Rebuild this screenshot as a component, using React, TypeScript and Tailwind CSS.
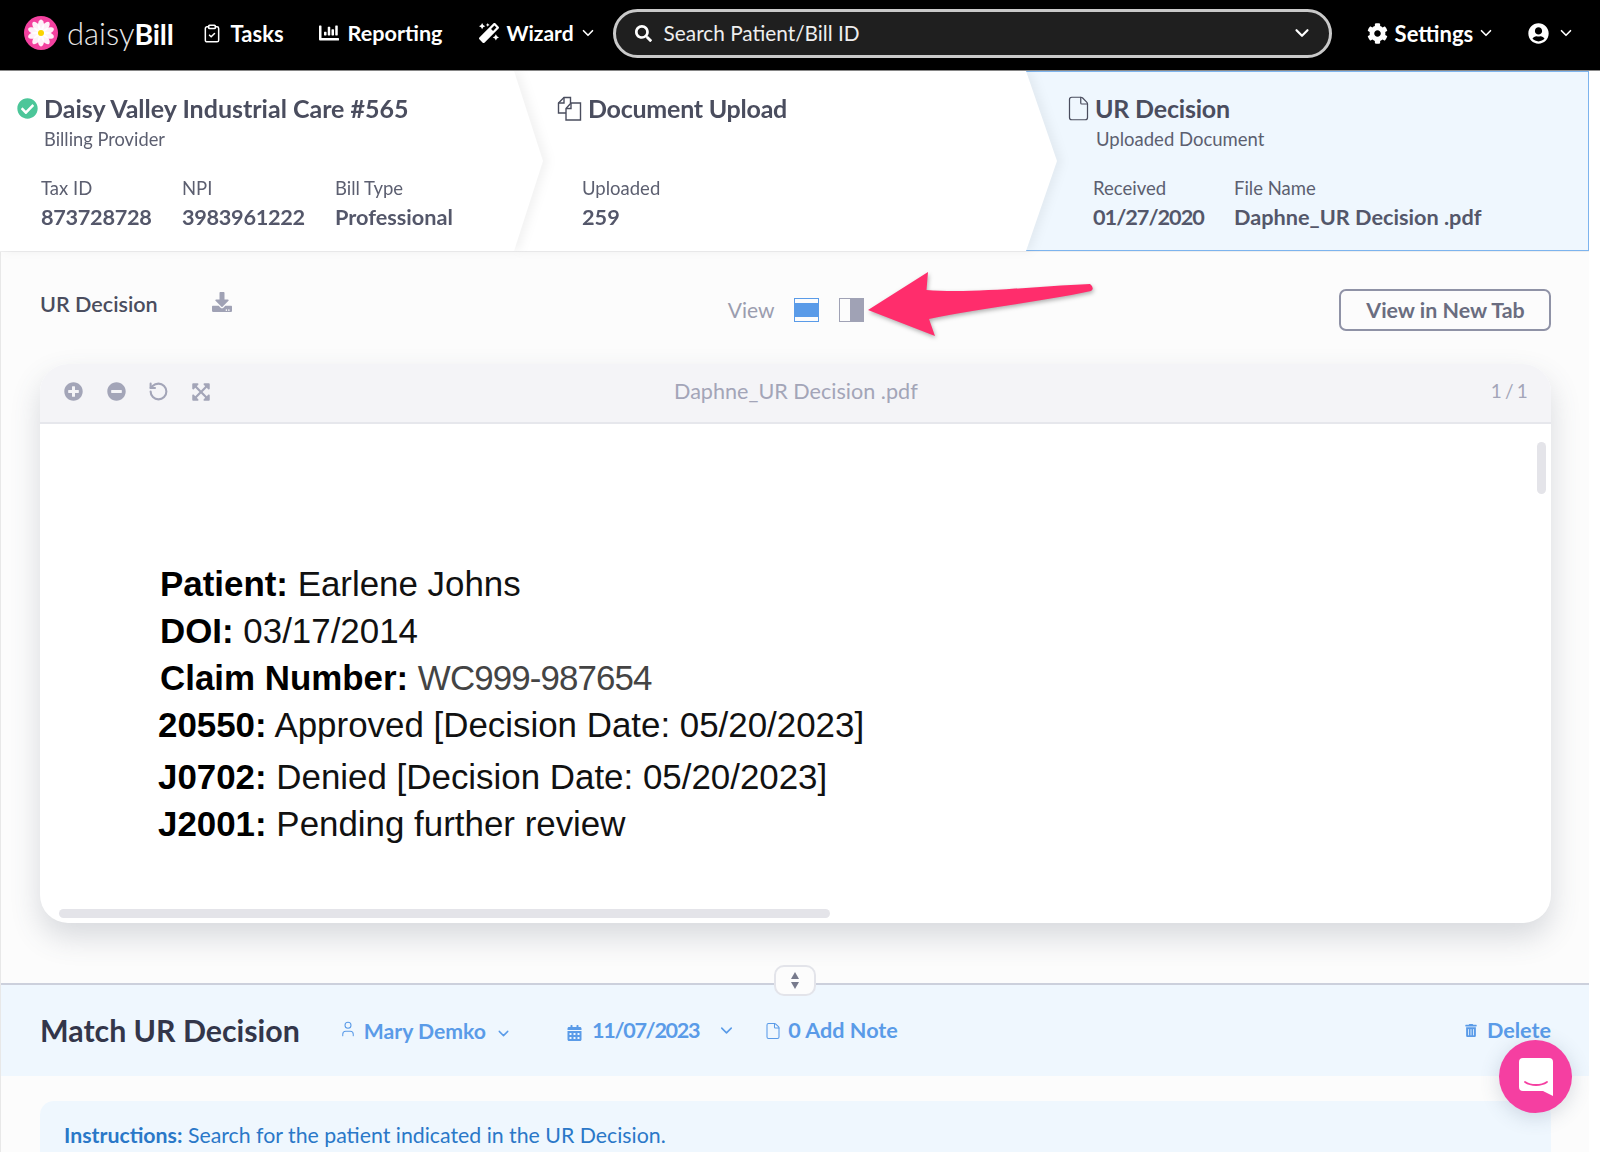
import { ChevronDown, ClipboardCheck, File, RotateCcw, User } from 'lucide-react';
import {
  FaCalendarAlt,
  FaChartBar,
  FaCheckCircle,
  FaCog,
  FaDownload,
  FaExpandArrowsAlt,
  FaMagic,
  FaMinusCircle,
  FaPlusCircle,
  FaSearch,
  FaTrashAlt,
  FaUserCircle,
} from 'react-icons/fa';

function Logo() {
  const petals = [0, 36, 72, 108, 144, 180, 216, 252, 288, 324];
  return (
    <svg viewBox="0 0 34 34" className="h-[34px] w-[34px] shrink-0">
      <circle cx="17" cy="17" r="17" fill="#f3419f" />
      {petals.map((a) => (
        <ellipse key={a} cx="17" cy="9.5" rx="3.1" ry="6" fill="#fff" opacity="0.92" transform={`rotate(${a} 17 17)`} />
      ))}
      <circle cx="17" cy="17" r="3" fill="#fbd400" />
    </svg>
  );
}

function CopyDocs() {
  return (
    <svg viewBox="0 0 25 25" className="h-[25px] w-[25px] shrink-0" fill="none" stroke="#4a4d5e" strokeWidth="1.4">
      <path d="M9 17H1.5V7L7 1.5h6.5V7" />
      <path d="M7 1.5V7H1.5" />
      <path d="M9 24V12.5L14 7h9.5v17z" />
      <path d="M14 7v5.5H9" />
    </svg>
  );
}

function Stat({ label, value, className }: { label: string; value: string; className: string }) {
  return (
    <div className={className}>
      <div className="text-[18.5px] leading-[22px] text-[#5c5f70]">{label}</div>
      <div className="mt-[5px] text-[21.7px] leading-[26px] font-bold text-[#54576a]">{value}</div>
    </div>
  );
}

function NavBar() {
  return (
    <nav className="flex h-[71px] shrink-0 items-center border-b border-[#8a8a8a] bg-black pb-[4px] pl-[24px] text-white">
      <Logo />
      <span className="ml-[9px] text-[31px] leading-none font-light text-[#e8e8e8]">
        daisy<span className="text-[28.5px] font-bold tracking-[-0.2px] text-white">Bill</span>
      </span>
      <ClipboardCheck className="ml-[28px] h-[23px] w-[20px]" strokeWidth={1.8} />
      <span className="ml-[9px] text-[22px] font-bold">Tasks</span>
      <FaChartBar className="ml-[35px] h-[20px] w-[20px]" />
      <span className="ml-[9px] text-[21.6px] font-bold">Reporting</span>
      <FaMagic className="ml-[36px] h-[20px] w-[20px]" />
      <span className="ml-[8px] text-[21px] font-bold">Wizard</span>
      <ChevronDown className="ml-[5px] h-[18px] w-[18px]" strokeWidth={2.2} />
      <div className="ml-[16px] flex h-[49px] w-[719px] items-center rounded-full border-[3px] border-[#c9c9c9] bg-[#1f1f1f] pr-[16px] pl-[19px]">
        <FaSearch className="h-[17px] w-[17px]" />
        <span className="ml-[12px] text-[20.8px] text-[#eeeeee]">Search Patient/Bill ID</span>
        <ChevronDown className="ml-auto h-[22px] w-[22px]" strokeWidth={2.4} />
      </div>
      <FaCog className="ml-[35px] h-[21px] w-[21px]" />
      <span className="ml-[7px] text-[22px] font-bold">Settings</span>
      <ChevronDown className="ml-[4px] h-[18px] w-[18px]" strokeWidth={2.2} />
      <FaUserCircle className="ml-[33px] h-[21px] w-[21px]" />
      <ChevronDown className="ml-[8px] h-[18px] w-[18px]" strokeWidth={2.2} />
    </nav>
  );
}

function Steps() {
  return (
    <div className="flex h-[181px] w-[1589px] shrink-0 border-b border-[#eeeeef] text-[#4a4d5e]">
      <div className="relative z-20 w-[543px] shrink-0 drop-shadow-[5px_0_5px_rgba(0,0,0,0.05)]">
        <div className="h-full bg-white pt-[21px] [clip-path:polygon(0_0,514px_0,543px_50%,514px_100%,0_100%)]">
          <div className="flex items-center pl-[17px]">
            <FaCheckCircle className="h-[21px] w-[21px] text-[#4cc699]" />
            <span className="ml-[6px] text-[25px] leading-[32px] font-bold">Daisy Valley Industrial Care #565</span>
          </div>
          <div className="mt-[3px] pl-[44px] text-[18.3px] leading-[24px] text-[#5c5f70]">Billing Provider</div>
          <div className="mt-[26px] flex pl-[41px]">
            <Stat label="Tax ID" value="873728728" className="w-[141px] [&>div:last-child]:tracking-[-0.3px]" />
            <Stat label="NPI" value="3983961222" className="w-[153px] [&>div:last-child]:tracking-[-0.3px]" />
            <Stat label="Bill Type" value="Professional" className="" />
          </div>
        </div>
      </div>
      <div className="relative z-10 -ml-[29px] w-[543px] shrink-0 drop-shadow-[5px_0_5px_rgba(0,0,0,0.05)]">
        <div className="h-full bg-white pt-[21px] [clip-path:polygon(0_0,512px_0,543px_50%,512px_100%,0_100%)]">
          <div className="flex items-center pl-[43px]">
            <CopyDocs />
            <span className="ml-[6px] text-[25px] leading-[32px] font-bold tracking-[-0.25px]">Document Upload</span>
          </div>
          <div className="mt-[29px] pl-[68px] pt-[24px]">
            <Stat label="Uploaded" value="259" className="" />
          </div>
        </div>
      </div>
      <div className="-ml-[31px] w-[563px] shrink-0 border-y border-r border-[#7db4ee] bg-[#eff7fe] pt-[20px]">
        <div className="flex items-center pl-[39px]">
          <File className="h-[29px] w-[27px] text-[#4a4d5e]" strokeWidth={1.1} />
          <span className="ml-[3px] text-[25px] leading-[32px] font-bold tracking-[-0.2px]">UR Decision</span>
        </div>
        <div className="mt-[3px] pl-[70px] text-[18.5px] leading-[24px] text-[#5c5f70]">Uploaded Document</div>
        <div className="mt-[26px] flex pl-[67px]">
          <Stat label="Received" value="01/27/2020" className="w-[141px] [&>div:last-child]:tracking-[-1px]" />
          <Stat label="File Name" value="Daphne_UR Decision .pdf" className="" />
        </div>
      </div>
    </div>
  );
}

function Arrow() {
  return (
    <svg viewBox="0 0 240 80" className="absolute top-[264px] left-[860px] h-[80px] w-[240px] drop-shadow-[1px_2px_2px_rgba(0,0,0,0.3)]">
      <path d="M8 46 L68 8 L66.5 26 C110 30 180 22 230 20 Q235 24 231 27 C180 38 110 46 69 55 L75 72 Z" fill="#ff2d6c" />
    </svg>
  );
}

function DocLine({ bold, text, className, textClass }: { bold: string; text: string; className: string; textClass?: string }) {
  return (
    <div className={className}>
      <span className="font-bold text-black">{bold}</span> <span className={textClass}>{text}</span>
    </div>
  );
}

function Viewer() {
  return (
    <div className="mt-[32px] ml-[39px] flex h-[559px] w-[1511px] flex-col overflow-hidden rounded-[28px] bg-white shadow-[0_14px_30px_rgba(70,80,100,0.2)]">
      <div className="relative flex h-[60px] shrink-0 items-center border-b-2 border-[#e6e7ec] bg-[#f4f4f7] pb-[3px] text-[#a3a5b8]">
        <FaPlusCircle className="ml-[24px] h-[19px] w-[19px]" />
        <FaMinusCircle className="ml-[24px] h-[19px] w-[19px]" />
        <RotateCcw className="ml-[22px] h-[21px] w-[21px]" strokeWidth={2.4} />
        <FaExpandArrowsAlt className="ml-[22px] h-[20px] w-[20px]" />
        <span className="ml-[463px] text-[21.6px]">Daphne_UR Decision .pdf</span>
        <span className="ml-auto pr-[24px] text-[19px] tracking-[-0.8px]">1 / 1</span>
      </div>
      <div className="relative flex-1 pt-[136px] [font-family:'Liberation_Sans',Arial,sans-serif] text-[34.9px] leading-[47px] text-[#111]">
        <div className="absolute top-[18px] right-[5px] h-[52px] w-[9px] rounded-full bg-[#e4e4e9]" />
        <DocLine bold="Patient:" text="Earlene Johns" className="pl-[120px]" />
        <DocLine bold="DOI:" text="03/17/2014" className="pl-[120px]" />
        <DocLine bold="Claim Number:" text="WC999-987654" className="pl-[120px]" textClass="tracking-[-0.9px] text-[#444]" />
        <DocLine bold="20550:" text="Approved [Decision Date: 05/20/2023]" className="pl-[118px]" />
        <DocLine bold="J0702:" text="Denied [Decision Date: 05/20/2023]" className="mt-[5px] pl-[118px]" />
        <DocLine bold="J2001:" text="Pending further review" className="pl-[118px]" />
        <div className="absolute bottom-[5px] left-[19px] h-[9px] w-[771px] rounded-full bg-[#e4e4e9]" />
      </div>
    </div>
  );
}

export default function App() {
  return (
    <div className="relative flex h-[1152px] w-[1600px] flex-col overflow-hidden bg-white [font-family:Lato,'Open_Sans',sans-serif]">
      <NavBar />
      <Steps />
      <main className="flex w-[1589px] flex-1 flex-col border-l border-[#e8e8e8] bg-[#fcfcfc]">
        <div className="flex h-[80px] shrink-0 pt-[38px]">
          <span className="mt-[2px] ml-[39px] text-[21.6px] leading-[24px] font-semibold text-[#4a4d5e]">UR Decision</span>
          <FaDownload className="mt-[2px] ml-[54px] h-[20px] w-[20px] text-[#a0a2b5]" />
          <span className="mt-[7px] ml-[496px] text-[21px] leading-[26px] text-[#9b9daf]">View</span>
          <div className="mt-[8px] ml-[20px] h-[24px] w-[25px] border border-[#5a9be8] py-[4px]">
            <div className="h-full bg-[#5a9be8]" />
          </div>
          <div className="mt-[8px] ml-[20px] flex h-[24px] w-[25px] justify-end border border-[#a0a2b5]">
            <div className="h-full w-[13px] bg-[#a0a2b5]" />
          </div>
          <button className="mt-[-1px] ml-[475px] h-[42px] w-[212px] rounded-[7px] border-2 border-[#8f92a6] text-[21.4px] font-bold text-[#6a6d80]">
            View in New Tab
          </button>
        </div>
        <Viewer />
        <div className="relative mt-[60px] h-[2px] shrink-0 bg-[#ccd0dc]">
          <div className="absolute top-[-18px] left-[773px] flex h-[31px] w-[42px] flex-col items-center justify-center gap-[3px] rounded-[10px] border-2 border-[#e3e4ea] bg-[#fcfcfc]">
            <div className="h-0 w-0 border-x-[4px] border-b-[7px] border-x-transparent border-b-[#777a8c]" />
            <div className="h-0 w-0 border-x-[4px] border-t-[7px] border-x-transparent border-t-[#777a8c]" />
          </div>
        </div>
        <div className="flex h-[91px] shrink-0 items-center bg-[#eff7fe] pr-[38px] pl-[39px] text-[21.6px] font-bold text-[#5a9be8]">
          <span className="text-[30.3px] text-[#33364a]">Match UR Decision</span>
          <User className="mt-[-3px] ml-[39px] h-[20px] w-[18px]" strokeWidth={1.4} />
          <span className="mt-[3px] ml-[7px] text-[21.2px]">Mary Demko</span>
          <ChevronDown className="mt-[5px] ml-[9px] h-[17px] w-[17px]" strokeWidth={2} />
          <FaCalendarAlt className="mt-[4px] ml-[55px] h-[16px] w-[15px]" />
          <span className="ml-[10px] tracking-[-1.3px]">11/07/2023</span>
          <ChevronDown className="ml-[18px] h-[19px] w-[19px]" strokeWidth={2} />
          <File className="ml-[28px] h-[20px] w-[18px]" strokeWidth={1.4} />
          <span className="ml-[6px]">0 Add Note</span>
          <FaTrashAlt className="ml-auto h-[13px] w-[12px]" />
          <span className="ml-[10px]">Delete</span>
        </div>
        <div className="mt-[25px] ml-[39px] h-[60px] w-[1511px] rounded-t-[14px] bg-[#eff7fe] pt-[22px] pl-[24px] text-[21.3px] leading-[24px] text-[#2a78c8]">
          <span className="font-bold">Instructions:</span> Search for the patient indicated in the UR Decision.
        </div>
      </main>
      <Arrow />
      <div className="absolute top-[1040px] left-[1499px] flex h-[73px] w-[73px] items-center justify-center rounded-full bg-[#f53fa1] shadow-[0_4px_20px_rgba(60,80,110,0.2)]">
        <svg viewBox="0 0 34 38" className="h-[38px] w-[34px]">
          <path d="M4 0h26a4 4 0 0 1 4 4v34l-10-5H4a4 4 0 0 1-4-4V4a4 4 0 0 1 4-4z" fill="#fff" />
          <path d="M6 24c6 4 16 4 22 0" fill="none" stroke="#f53fa1" strokeWidth="1.8" strokeLinecap="round" />
        </svg>
      </div>
    </div>
  );
}
